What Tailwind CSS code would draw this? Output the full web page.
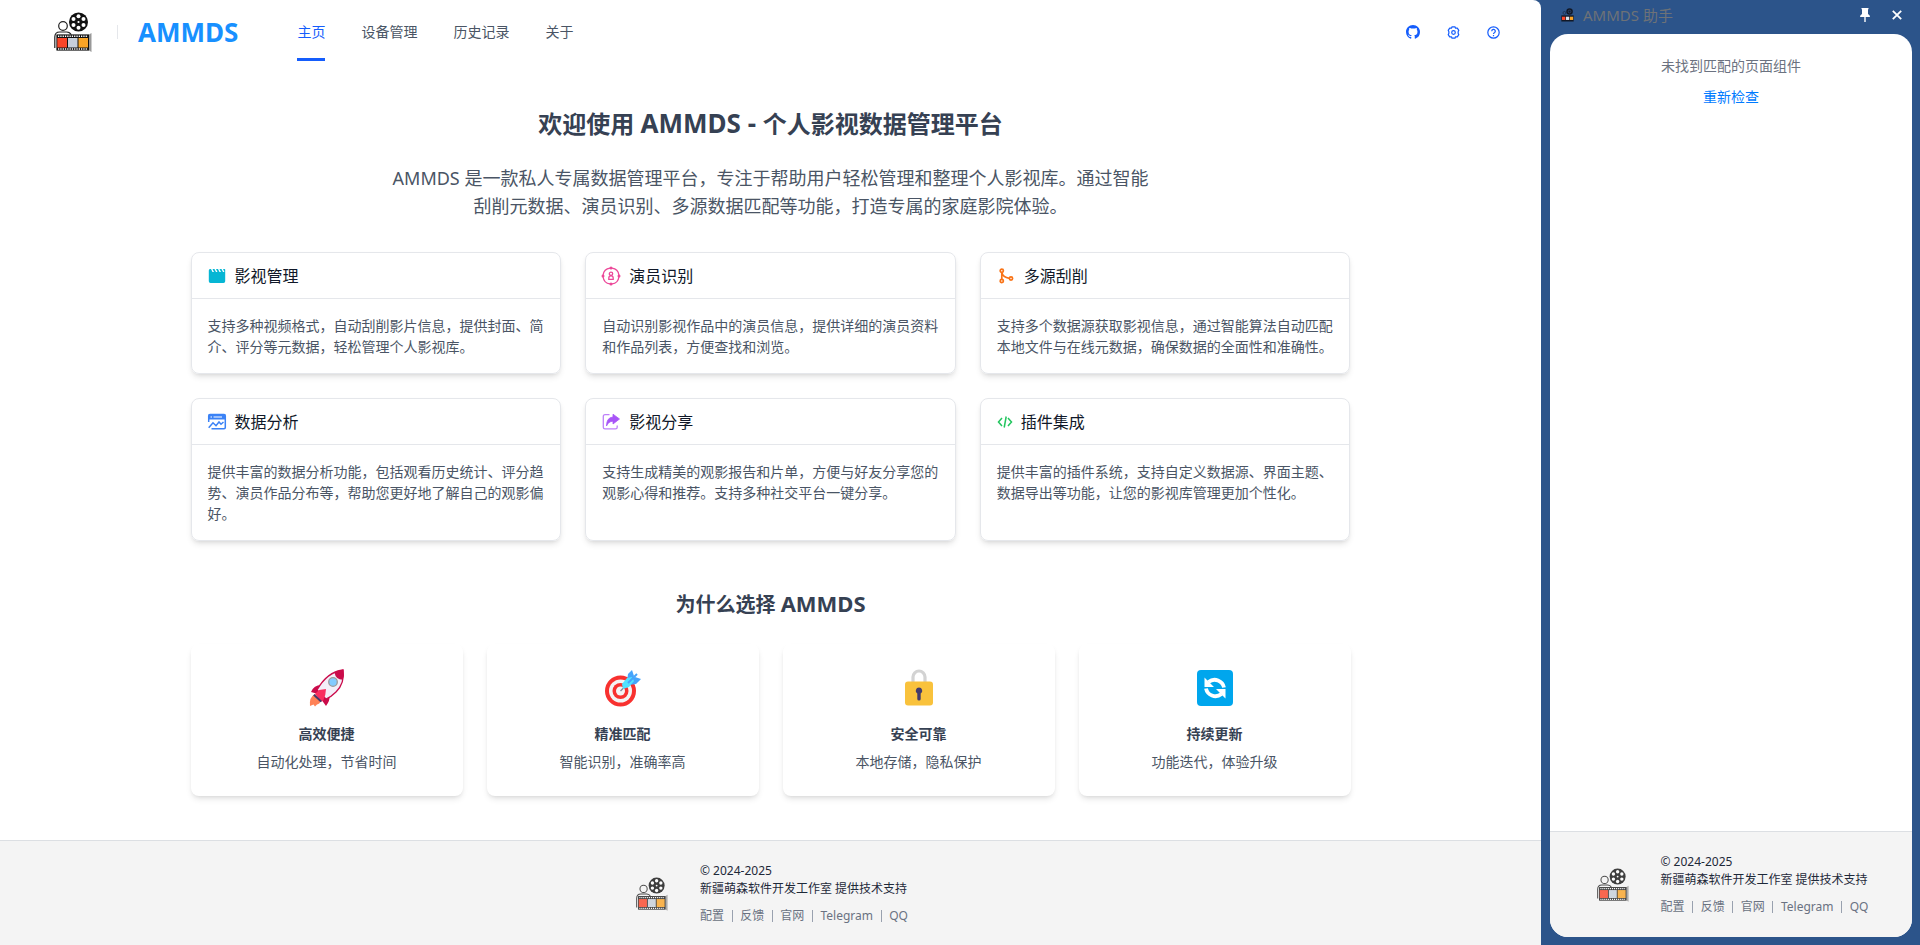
<!DOCTYPE html>
<html lang="zh-CN">
<head>
<meta charset="utf-8">
<title>AMMDS</title>
<script src="https://cdn.jsdelivr.net/npm/@tailwindcss/browser@4"></script>
</head>
<body class="flex min-h-screen bg-[#2c548a] font-['Noto_Sans','Noto_Sans_CJK_SC',sans-serif] text-sm text-gray-600">

<svg class="hidden" aria-hidden="true">
  <symbol id="logo" viewBox="0 0 38 40">
    <circle cx="24.500" cy="10" r="9.500" fill="#111"/>
    <g fill="#fff"><circle cx="24.500" cy="4.200" r="2"/><circle cx="29.500" cy="7" r="2"/><circle cx="29.500" cy="13" r="2"/><circle cx="24.500" cy="15.800" r="2"/><circle cx="19.500" cy="13" r="2"/><circle cx="19.500" cy="7" r="2"/><circle cx="24.500" cy="10" r="1.100"/></g>
    <circle cx="9" cy="14" r="4.300" fill="none" stroke="#222" stroke-width="1.200"/>
    <path d="M.8 36V25q0-5 5-5h7q3 0 4.500 3" fill="none" stroke="#222" stroke-width="1.200"/>
    <path d="M2.500 22.500H35L37.500 21v19L35 38.500H2.500z" fill="#999"/>
    <path d="M2.500 22.500H35v16H2.500z" fill="#111"/>
    <path d="M4 24.200h30M4 37h30" stroke="#fff" stroke-width="1.400" stroke-dasharray="1.300 1"/>
    <path d="M3.300 26h9.700v9.500H3.300z" fill="#fb4528"/><path d="M14 26h9.500v9.500H14z" fill="#c7cfdb"/><path d="M24.500 26h9.500v9.500h-9.500z" fill="#f9a426"/>
  </symbol>
  <symbol id="logo-small" viewBox="0 0 38 40">
    <circle cx="25" cy="10" r="9.500" fill="#111827"/><circle cx="25" cy="10" r="4" fill="none" stroke="#33507c" stroke-width="2"/>
    <circle cx="10" cy="14" r="4.300" fill="none" stroke="#1c2a44" stroke-width="2"/>
    <path d="M1 21h36v18H1z" fill="#111827"/>
    <path d="M3 25h9.500v9.500H3z" fill="#fb4528"/><path d="M14.500 25H24v9.500h-9.500z" fill="#dbe3ee"/><path d="M26 25h9.500v9.500H26z" fill="#f9a426"/>
  </symbol>
</svg>

<div class="flex min-w-0 flex-1 flex-col overflow-hidden rounded-tr-lg bg-white">
  <header class="flex h-16 items-center pr-9 pl-[54px]">
    <svg class="h-10 w-[38px]"><use href="#logo"/></svg>
    <span class="ml-[25px] h-[14px] w-px bg-gray-200"></span>
    <a href="#" class="ml-5 text-[26px] leading-8 font-bold text-[#1890ff]">AMMDS</a>
    <nav class="ml-[59px] flex h-full flex-1 gap-9">
      <a href="#" class="relative flex items-center text-[#155dfc]">主页<span class="absolute inset-x-0 bottom-[3px] h-[3px] bg-[#155dfc]"></span></a>
      <a href="#" class="flex items-center">设备管理</a>
      <a href="#" class="flex items-center">历史记录</a>
      <a href="#" class="flex items-center">关于</a>
    </nav>
    <div class="flex items-center gap-4 text-[#155dfc]">
      <a href="#" aria-label="GitHub" class="grid size-6 place-items-center"><svg class="size-[14px]" viewBox="0 0 16 16" fill="currentColor"><path d="M8 0C3.580 0 0 3.580 0 8c0 3.540 2.290 6.530 5.470 7.590.4.070.55-.17.55-.38 0-.19-.01-.82-.01-1.490-2.010.37-2.530-.49-2.690-.94-.09-.23-.48-.94-.82-1.130-.28-.15-.68-.52-.01-.53.63-.01 1.080.58 1.230.82.72 1.210 1.870.87 2.330.66.07-.52.28-.87.51-1.070-1.780-.2-3.640-.89-3.640-3.950 0-.87.31-1.590.82-2.150-.08-.2-.36-1.020.08-2.120 0 0 .67-.21 2.200.82a7.600 7.600 0 0 1 4 0c1.530-1.040 2.200-.82 2.200-.82.44 1.100.16 1.920.08 2.120.51.56.82 1.270.82 2.150 0 3.070-1.870 3.750-3.650 3.950.29.25.54.73.54 1.480 0 1.070-.01 1.930-.01 2.200 0 .21.15.46.55.38A8.010 8.010 0 0 0 16 8c0-4.420-3.580-8-8-8z"/></svg></a>
      <button aria-label="设置" class="grid size-6 place-items-center"><svg class="size-[13px]" viewBox="0 0 16 16" fill="none" stroke="currentColor" stroke-width="1.500" stroke-linejoin="round"><path d="M6.200 1h3.600l.7 1.700 2.200-.1 1.800 2.700L13.700 7v2l.8 1.700-1.800 2.700-2.200-.1-.7 1.700H6.200l-.7-1.700-2.200.1-1.800-2.700L2.300 9V7l-.8-1.700 1.800-2.700 2.200.1z"/><circle cx="8" cy="8" r="2.200"/></svg></button>
      <button aria-label="帮助" class="grid size-6 place-items-center"><svg class="size-[13px]" viewBox="0 0 16 16" fill="none" stroke="currentColor" stroke-width="1.500"><circle cx="8" cy="8" r="7"/><path d="M5.800 6.400a2.200 2.200 0 1 1 3.300 1.900Q8 8.900 8 9.900M8 11v1.500"/></svg></button>
    </div>
  </header>

  <main class="flex-1 px-6 pt-10">
    <div class="mx-auto max-w-[1160px]">
      <h1 class="mt-[3px] text-center text-2xl font-bold text-gray-700">欢迎使用 <span class="text-[26px] leading-8">AMMDS - </span>个人影视数据管理平台</h1>
      <p class="mx-auto mt-6 max-w-3xl text-center text-lg leading-7">AMMDS 是一款私人专属数据管理平台，专注于帮助用户轻松管理和整理个人影视库。通过智能刮削元数据、演员识别、多源数据匹配等功能，打造专属的家庭影院体验。</p>

      <section class="mt-8 grid grid-cols-3 gap-6 leading-[21px]">
        <article class="rounded-lg border border-gray-200 shadow-md">
          <h2 class="flex h-[46px] items-center gap-2 border-b border-gray-200 px-[15px] text-base text-gray-900"><svg class="size-5 text-[#06b6d4]" viewBox="0 0 20 20" fill="currentColor"><path d="M3 3h1l1.500 3H7L5.500 3h2L9 6h1.500L9 3h2l1.500 3H14l-1.500-3h2L16 6h1.500L16 3h1.500q.7 0 .7.700v11.600q0 1.700-1.700 1.700h-13q-1.700 0-1.700-1.700V4.500Q1.800 3 3 3z"/></svg>影视管理</h2>
          <p class="p-4">支持多种视频格式，自动刮削影片信息，提供封面、简介、评分等元数据，轻松管理个人影视库。</p>
        </article>
        <article class="rounded-lg border border-gray-200 shadow-md">
          <h2 class="flex h-[46px] items-center gap-2 border-b border-gray-200 px-[15px] text-base text-gray-900"><svg class="size-5 text-[#ec4899]" viewBox="0 0 20 20" fill="none" stroke="currentColor" stroke-width="1.300"><path d="M11 2.100a8 8 0 0 1 6.900 6.900M17.900 11a8 8 0 0 1-6.900 6.900M9 17.900a8 8 0 0 1-6.900-6.900M2.100 9A8 8 0 0 1 9 2.100"/><g fill="currentColor" stroke="none"><circle cx="10" cy="2" r="1.500"/><circle cx="18" cy="10" r="1.500"/><circle cx="10" cy="18" r="1.500"/><circle cx="2" cy="10" r="1.500"/></g><circle cx="10" cy="7.800" r="1.700"/><path d="M7.800 13.400v-1.500q0-2 2.200-2t2.200 2v1.500z"/></svg>演员识别</h2>
          <p class="p-4">自动识别影视作品中的演员信息，提供详细的演员资料和作品列表，方便查找和浏览。</p>
        </article>
        <article class="rounded-lg border border-gray-200 shadow-md">
          <h2 class="flex h-[46px] items-center gap-2 border-b border-gray-200 px-[15px] text-base text-gray-900"><svg class="size-5 text-[#f97316]" viewBox="0 0 20 20" fill="none" stroke="currentColor" stroke-width="1.700"><circle cx="5.800" cy="4.800" r="1.600"/><circle cx="5.800" cy="15" r="1.600"/><circle cx="15" cy="12.500" r="1.600"/><path d="M5.800 6.400v7M5.800 6.400q1 5 7.600 5.900"/></svg>多源刮削</h2>
          <p class="p-4">支持多个数据源获取影视信息，通过智能算法自动匹配本地文件与在线元数据，确保数据的全面性和准确性。</p>
        </article>
        <article class="rounded-lg border border-gray-200 shadow-md">
          <h2 class="flex h-[46px] items-center gap-2 border-b border-gray-200 px-[15px] text-base text-gray-900"><svg class="size-5 text-[#3b82f6]" viewBox="0 0 20 20" fill="none" stroke="currentColor" stroke-width="1.500"><path d="M1.700 10V4q0-1.500 1.300-1.500h14q1.300 0 1.300 1.500v11.500q0 1.200-1.300 1.200H4.500"/><path d="M1.700 2.500h16.600v5H1.700z" fill="currentColor" stroke="none"/><path d="M3.500 5H5M6.500 5H15" stroke="#fff" stroke-width="1.100"/><path d="m1.700 15.800 4.300-5 3 2.900 3-3.700 2 2.300 2.500-2.300"/></svg>数据分析</h2>
          <p class="p-4">提供丰富的数据分析功能，包括观看历史统计、评分趋势、演员作品分布等，帮助您更好地了解自己的观影偏好。</p>
        </article>
        <article class="rounded-lg border border-gray-200 shadow-md">
          <h2 class="flex h-[46px] items-center gap-2 border-b border-gray-200 px-[15px] text-base text-gray-900"><svg class="size-5 text-[#a855f7]" viewBox="0 0 20 20" fill="none" stroke="currentColor" stroke-width="1.300"><path d="M8.500 2.700H4Q2.300 2.700 2.300 4.400v10.800q0 1.700 1.700 1.700h10.500q1.700 0 1.700-1.700V13.500" opacity=".75"/><path d="M12 2.200 18.500 7 12 12V9.200Q7.500 9.300 5.500 14 5.500 5.500 12 5z" fill="currentColor" stroke-linejoin="round" stroke-width=".8"/></svg>影视分享</h2>
          <p class="p-4">支持生成精美的观影报告和片单，方便与好友分享您的观影心得和推荐。支持多种社交平台一键分享。</p>
        </article>
        <article class="rounded-lg border border-gray-200 shadow-md">
          <h2 class="flex h-[46px] items-center gap-2 border-b border-gray-200 px-4 text-base text-gray-900"><svg class="size-4 text-[#22c55e]" viewBox="0 0 16 16" fill="none" stroke="currentColor" stroke-width="1.500"><path d="M5 4 1.500 8 5 12M11 4l3.500 4-3.500 4M9.200 2.500 7.200 13.500"/></svg>插件集成</h2>
          <p class="p-4">提供丰富的插件系统，支持自定义数据源、界面主题、数据导出等功能，让您的影视库管理更加个性化。</p>
        </article>
      </section>

      <h2 class="mt-12 text-center text-xl leading-7 font-bold text-gray-700">为什么选择 <span class="text-[22px]">AMMDS</span></h2>

      <section class="mt-[25px] mb-10 grid grid-cols-4 gap-6 text-center">
        <article class="rounded-lg p-6 shadow-md">
          <svg class="mx-auto mb-4 size-10" viewBox="0 0 40 40"><path d="M3 38q-1-9 5-12l6 6q-1 4-4 4.500l-2 2-1.500-2z" fill="#ff8257"/><path d="M14 17q-7 0-10 7l7 2zM23 26q0 7-4 12l-5-7z" fill="#ca0b4a"/><path d="M36 2q2 13-7 22-5 5-10 7l-9-9Q20 4 36 2z" fill="#f3eef8" stroke="#ca0b4a" stroke-width="1.300"/><path d="M36.500 1.500q1 5-.8 10.200-7 0-8.200-7.200 4-2.500 9-3z" fill="#ca0b4a"/><path d="m8 26 4-4 7-1q0 6-3 12l-2 .5z" fill="#f92f60"/><path d="m7.500 26 7.500 7-1.500 1.200L6.200 27.500z" fill="#433b6b"/><circle cx="26" cy="14" r="4.300" fill="#83cbff" stroke="#9b9b9b" stroke-width="1.300"/></svg>
          <h3 class="mb-2 font-bold text-gray-700">高效便捷</h3>
          <p>自动化处理，节省时间</p>
        </article>
        <article class="rounded-lg p-6 shadow-md">
          <svg class="mx-auto mb-4 size-10" viewBox="0 0 40 40"><circle cx="17.500" cy="23" r="15.500" fill="#f8312f"/><circle cx="17.500" cy="23" r="11.500" fill="#f4f4f4"/><circle cx="17.500" cy="23" r="8" fill="#f8312f"/><circle cx="17.500" cy="23" r="4.500" fill="#f4f4f4"/><path d="m17.500 23 5-5" stroke="#889" stroke-width="1.500"/><path d="m24 13 1-7 4-4 2 6-6 10zM26 17l7-1 5-5-6-2-9 6z" fill="#46a4fb"/><path d="m20 21-1-5 5-6 5-1 2 4-5 6z" fill="#50e2ff"/><path d="M25 15 34 6" stroke="#46a4fb" stroke-width="2"/></svg>
          <h3 class="mb-2 font-bold text-gray-700">精准匹配</h3>
          <p>智能识别，准确率高</p>
        </article>
        <article class="rounded-lg p-6 shadow-md">
          <svg class="mx-auto mb-4 size-10" viewBox="0 0 40 40"><path d="M14 16V9a6 6 0 0 1 12 0v7" fill="none" stroke="#d3d3d3" stroke-width="3.200"/><rect x="6" y="13.500" width="28" height="24" rx="3" fill="#f9c23c"/><path d="M20 19.500a3.300 3.300 0 0 1 1.700 6.100V31q0 1.500-1.700 1.500T18.300 31v-5.400A3.300 3.300 0 0 1 20 19.500z" fill="#433b6b"/></svg>
          <h3 class="mb-2 font-bold text-gray-700">安全可靠</h3>
          <p>本地存储，隐私保护</p>
        </article>
        <article class="rounded-lg p-6 shadow-md">
          <svg class="mx-auto mb-4 size-10" viewBox="0 0 40 40"><rect x="2" y="2" width="36" height="36" rx="4" fill="#00a6ed"/><g fill="none" stroke="#fff" stroke-width="3.800"><path d="M13.500 14Q18 10.500 23 12.500T29 19.500"/><path d="M26.500 26Q22 29.500 17 27.500T11 20.500"/></g><path d="M9.500 9.500V19H19zM30.500 30.500V21H21z" fill="#fff"/></svg>
          <h3 class="mb-2 font-bold text-gray-700">持续更新</h3>
          <p>功能迭代，体验升级</p>
        </article>
      </section>
    </div>
  </main>

  <footer class="flex items-center justify-center gap-8 border-t border-gray-300/70 bg-[#f4f4f4] pt-[21px] pb-[19px] pl-[3px] text-xs text-gray-800">
    <svg class="h-[34px] w-8 opacity-80"><use href="#logo"/></svg>
    <div class="w-52">
      <p class="leading-[18px]">© 2024-2025<br>新疆萌森软件开发工作室 提供技术支持</p>
      <nav class="mt-2 flex items-center justify-between leading-5 text-gray-500"><a href="#">配置</a><span class="h-3 w-px bg-gray-400"></span><a href="#">反馈</a><span class="h-3 w-px bg-gray-400"></span><a href="#">官网</a><span class="h-3 w-px bg-gray-400"></span><a href="#">Telegram</a><span class="h-3 w-px bg-gray-400"></span><a href="#">QQ</a></nav>
    </div>
  </footer>
</div>

<aside class="flex w-[379px] shrink-0 flex-col pr-2 pb-2 pl-[9px]">
  <header class="flex h-[34px] items-center pr-[3px] pb-1 pl-[11px]">
    <svg class="h-[14px] w-[13px]"><use href="#logo-small"/></svg>
    <span class="ml-[9px] flex-1 text-[15px] leading-6 text-[#6e7277]">AMMDS 助手</span>
    <button aria-label="固定" class="grid size-6 place-items-center text-white"><svg class="h-[14px] w-[10px]" viewBox="0 0 10 14" fill="currentColor"><path d="M1.500 0h7v1L8 1.500V6q2 1 2 3H5.700v5H4.300V9H0q0-2 2-3V1.500L1.500 1z"/></svg></button>
    <button aria-label="关闭" class="ml-2 grid size-6 place-items-center text-white"><svg class="size-[10px]" viewBox="0 0 10 10" fill="none" stroke="currentColor" stroke-width="1.800"><path d="m.8.8 8.400 8.400M9.200.8.8 9.200"/></svg></button>
  </header>
  <div class="flex flex-1 flex-col overflow-hidden rounded-[18px] bg-white">
    <div class="flex flex-1 flex-col items-center gap-[11px] pt-[22px]">
      <p class="text-[#6b7280]">未找到匹配的页面组件</p>
      <button class="text-sm text-[#007bff]">重新检查</button>
    </div>
    <footer class="flex items-center justify-center gap-8 border-t border-gray-300/70 bg-[#f4f4f4] pt-[21px] pb-5 pl-[3px] text-xs text-gray-800">
      <svg class="h-[34px] w-8 opacity-80"><use href="#logo"/></svg>
      <div class="w-52">
        <p class="leading-[18px]">© 2024-2025<br>新疆萌森软件开发工作室 提供技术支持</p>
        <nav class="mt-2 flex items-center justify-between leading-5 text-gray-500"><a href="#">配置</a><span class="h-3 w-px bg-gray-400"></span><a href="#">反馈</a><span class="h-3 w-px bg-gray-400"></span><a href="#">官网</a><span class="h-3 w-px bg-gray-400"></span><a href="#">Telegram</a><span class="h-3 w-px bg-gray-400"></span><a href="#">QQ</a></nav>
      </div>
    </footer>
  </div>
</aside>
</body>
</html>
